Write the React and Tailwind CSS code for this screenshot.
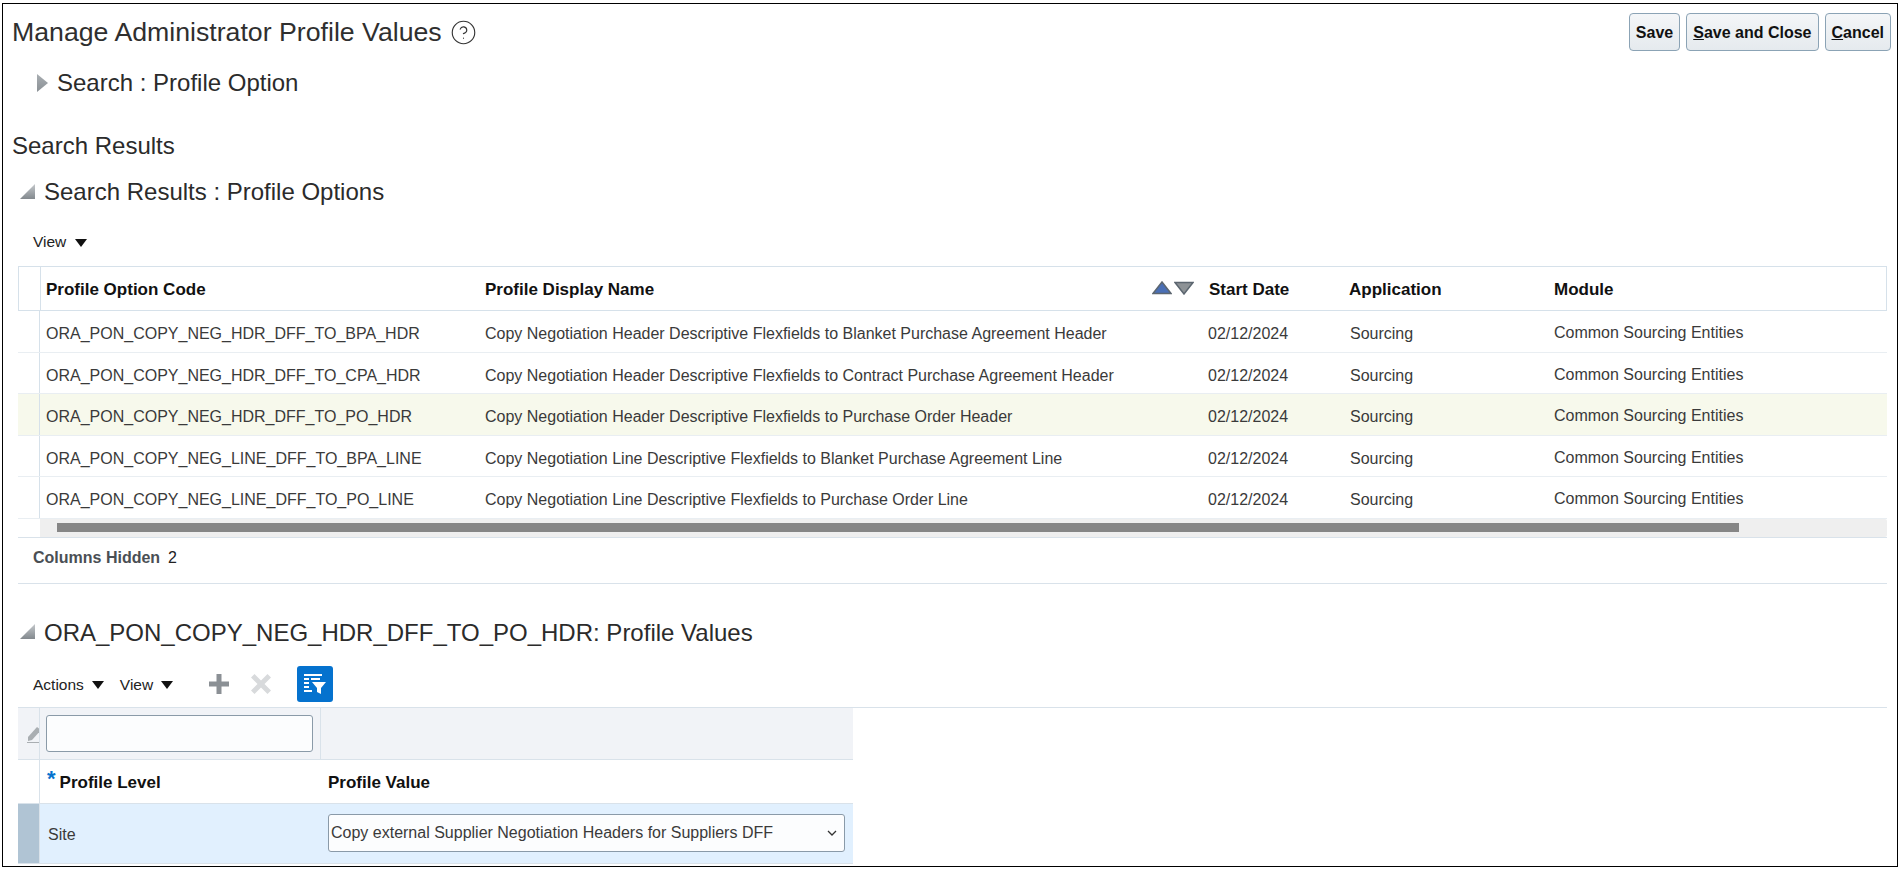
import React from 'react';
import { CircleHelp } from 'lucide-react';

const rows = [
  ['ORA_PON_COPY_NEG_HDR_DFF_TO_BPA_HDR', 'Copy Negotiation Header Descriptive Flexfields to Blanket Purchase Agreement Header'],
  ['ORA_PON_COPY_NEG_HDR_DFF_TO_CPA_HDR', 'Copy Negotiation Header Descriptive Flexfields to Contract Purchase Agreement Header'],
  ['ORA_PON_COPY_NEG_HDR_DFF_TO_PO_HDR', 'Copy Negotiation Header Descriptive Flexfields to Purchase Order Header'],
  ['ORA_PON_COPY_NEG_LINE_DFF_TO_BPA_LINE', 'Copy Negotiation Line Descriptive Flexfields to Blanket Purchase Agreement Line'],
  ['ORA_PON_COPY_NEG_LINE_DFF_TO_PO_LINE', 'Copy Negotiation Line Descriptive Flexfields to Purchase Order Line'],
];

const gridCols = 'grid grid-cols-[22px_434px_727px_141px_206px_1fr]';

const Caret = () => (
  <svg width="12" height="8" viewBox="0 0 12 8" className="mt-[2px] shrink-0">
    <path d="M0 0h12L6 8z" fill="#111" />
  </svg>
);

const CollapseIcon = () => (
  <svg width="15" height="15" viewBox="0 0 15 15" className="-mt-[2px] shrink-0">
    <defs>
      <linearGradient id="collapseFill" x1="0" y1="0" x2="0" y2="1">
        <stop offset="0" stopColor="#c4c8cb" />
        <stop offset="1" stopColor="#83898e" />
      </linearGradient>
    </defs>
    <path d="M15 0v15H0z" fill="url(#collapseFill)" />
  </svg>
);

const ExpandIcon = () => (
  <svg width="11" height="18" viewBox="0 0 11 18" className="shrink-0">
    <defs>
      <linearGradient id="expandFill" x1="0" y1="0" x2="0" y2="1">
        <stop offset="0" stopColor="#a9aeb2" />
        <stop offset="1" stopColor="#8a9095" />
      </linearGradient>
    </defs>
    <path d="M0 0l11 9L0 18z" fill="url(#expandFill)" />
  </svg>
);

const SortIcons = () => (
  <div className="absolute right-[8px] top-[14px] flex gap-[2px]">
    <svg width="20" height="14" viewBox="0 0 20 14">
      <path d="M10 1l9 11.500H1z" fill="#4a6fb5" stroke="#5c6670" strokeWidth="1.500" />
    </svg>
    <svg width="20" height="14" viewBox="0 0 20 14">
      <path d="M1 1.500h18L10 13z" fill="#8d9296" stroke="#5c6670" strokeWidth="1.500" />
    </svg>
  </div>
);

const PageButton = ({ children }) => (
  <button className="h-[38px] rounded-[4px] border border-[#8ba3b5] bg-gradient-to-b from-[#f4f6f8] to-[#e5eaee] px-[6px] pt-[2px] text-[16px] font-bold text-[#111]">
    {children}
  </button>
);

export default function App() {
  return (
    <div className="h-[869px] w-full overflow-hidden bg-white pb-[2px] pl-[2px] pr-[1px] pt-[3px] font-['Liberation_Sans',Arial,sans-serif] text-[#2b2b2b]">
      <div className="h-full overflow-hidden border border-black pl-[9px] pr-[6px]">
        {/* Page header */}
        <div className="flex h-[56px] items-center justify-between">
          <div className="flex items-center gap-[8px]">
            <h1 className="text-[26.700px] font-normal text-[#2f2f2f]">Manage Administrator Profile Values</h1>
            <CircleHelp size={27} strokeWidth={1} className="mt-[2px] text-[#333]" />
          </div>
          <div className="flex gap-[6px]">
            <PageButton>Save</PageButton>
            <PageButton><u>S</u>ave and Close</PageButton>
            <PageButton><u>C</u>ancel</PageButton>
          </div>
        </div>

        <div className="flex h-[46px] items-center gap-[9px] pl-[25px]">
          <ExpandIcon />
          <h2 className="text-[24px] font-normal">Search : Profile Option</h2>
        </div>

        <h2 className="mt-[22px] flex h-[36px] items-center text-[24px] font-normal">Search Results</h2>

        <div className="pl-[6px] pr-[4px]">
          <div className="mt-[8px] flex h-[40px] items-center gap-[9px] pl-[2px]">
            <CollapseIcon />
            <h2 className="text-[24px] font-normal">Search Results : Profile Options</h2>
          </div>

          <div className="flex h-[54px] items-center gap-[9px] pl-[15px] pt-[6px] text-[15.500px] text-[#222]">
            <span>View</span>
            <Caret />
          </div>

          {/* Profile options table */}
          <div className={`${gridCols} h-[45px] items-start border border-[#d6e1ea] text-[17px] font-bold text-[#111]`}>
            <div className="self-stretch border-r border-[#d6e1ea]" />
            <div className="pl-[5px] pt-[10px]">Profile Option Code</div>
            <div className="relative self-stretch pl-[10px] pt-[10px]">
              Profile Display Name
              <SortIcons />
            </div>
            <div className="pl-[7px] pt-[10px]">Start Date</div>
            <div className="pl-[6px] pt-[10px]">Application</div>
            <div className="pl-[5px] pt-[10px]">Module</div>
          </div>

          {rows.map((row, i) => (
            <div
              key={row[0]}
              className={`${gridCols} h-[41.600px] items-start border-b border-[#e9eef2] text-[16px] text-[#3a3a3a] ${i === 2 ? 'bg-[#f7f9ec]' : ''}`}
            >
              <div className="self-stretch border-r border-[#d6e1ea]" />
              <div className="pl-[6px] pt-[11px]">{row[0]}</div>
              <div className="pl-[11px] pt-[11px]">{row[1]}</div>
              <div className="pl-[7px] pt-[11px]">02/12/2024</div>
              <div className="pl-[8px] pt-[11px]">Sourcing</div>
              <div className="pl-[6px] pt-[10px]">Common Sourcing Entities</div>
            </div>
          ))}

          <div className="h-[19px] border-b border-[#d9e2ea] pl-[22px]">
            <div className="flex h-[18px] items-center rounded-r-[2px] bg-[#efefef] pl-[17px]">
              <div className="h-[9px] w-[1682px] bg-[#868686]" />
            </div>
          </div>

          <div className="flex h-[46px] items-center gap-[8px] border-b border-[#d9e2ea] pb-[4px] pl-[15px] text-[16px]">
            <span className="font-bold text-[#4a4f54]">Columns Hidden</span>
            <span className="text-[#222]">2</span>
          </div>

          <div className="flex h-[75px] items-center gap-[9px] pl-[2px] pt-[23px]">
            <CollapseIcon />
            <h2 className="text-[24px] font-normal">ORA_PON_COPY_NEG_HDR_DFF_TO_PO_HDR: Profile Values</h2>
          </div>

          <div className="flex h-[48px] items-center pl-[15px] pt-[3px] text-[15.500px] text-[#222]">
            <span>Actions</span>
            <span className="ml-[8px]"><Caret /></span>
            <span className="ml-[16px]">View</span>
            <span className="ml-[8px]"><Caret /></span>
            <svg width="20" height="20" viewBox="0 0 20 20" className="ml-[36px]">
              <path d="M7.500 0h5v7.500H20v5h-7.500V20h-5v-7.500H0v-5h7.500z" fill="#8b9095" />
            </svg>
            <svg width="20" height="20" viewBox="0 0 20 20" className="ml-[22px]">
              <path d="M3.500 0L10 6.500 16.500 0 20 3.500 13.500 10 20 16.500 16.500 20 10 13.500 3.500 20 0 16.500 6.500 10 0 3.500z" fill="#d8dadc" />
            </svg>
            <div className="ml-[26px] flex h-[36px] w-[36px] items-center justify-center rounded-[3px] bg-[#0572ce]">
              <svg width="24" height="22" viewBox="0 0 24 22">
                <path d="M1 1h18v2H1zM1 5h5v2H1zM8 5h9v2H8zM1 9h5v2H1zM1 13h5v2H1zM1 17h8v2H1z" fill="#fff" />
                <path d="M9 9h14l-5 6v6l-4-2v-4z" fill="#fff" />
              </svg>
            </div>
          </div>

          {/* Profile values table */}
          <div className="border-t border-[#d9e2ea]">
            <div className="grid w-[835px] grid-cols-[22px_281px_1fr]">
              <div className="flex h-[52px] items-center overflow-hidden border-b border-r border-[#d9e2ea] bg-[#f1f3f7] pl-[9px] pt-[2px]">
                <svg width="16" height="18" viewBox="0 0 16 18" className="shrink-0">
                  <path d="M1 12L10 2l4 3-9 10-4 1z" fill="#a9aeb2" />
                  <path d="M0 17h16v1H0z" fill="#a9aeb2" />
                </svg>
              </div>
              <div className="flex h-[52px] items-center border-b border-r border-[#d9e2ea] bg-[#f1f3f7] pl-[6px]">
                <input className="h-[37px] w-[267px] rounded-[3px] border border-[#8a9aa8] bg-[#fcfdfe]" aria-label="Profile Level filter" />
              </div>
              <div className="h-[52px] border-b border-[#d9e2ea] bg-[#f1f3f7]" />

              <div className="h-[44px] border-b border-r border-[#d9e2ea]" />
              <div className="flex h-[44px] items-center border-b border-[#d9e2ea] pl-[7px] pt-[2px] text-[17px] font-bold text-[#111]">
                <span className="mr-[4px] -mt-[6px] text-[22px] leading-none text-[#0572ce]">*</span>
                Profile Level
              </div>
              <div className="flex h-[44px] items-center border-b border-[#d9e2ea] pl-[7px] pt-[2px] text-[17px] font-bold text-[#111]">Profile Value</div>

              <div className="h-[60px] border-b border-r border-[#d9e2ea] bg-[#b0c4d4]" />
              <div className="flex h-[60px] items-center border-b border-[#d9e2ea] bg-[#e1f0fe] pl-[8px] pt-[3px] text-[16px] text-[#3a3a3a]">Site</div>
              <div className="flex h-[60px] items-center border-b border-[#d9e2ea] bg-[#e1f0fe] pl-[7px]">
                <div className="flex h-[38px] w-[517px] items-center justify-between rounded-[3px] border border-[#8a9aa8] bg-[#fcfdfe] pl-[2px] pr-[7px] text-[16px] text-[#3a3a3a]">
                  <span>Copy external Supplier Negotiation Headers for Suppliers DFF</span>
                  <svg width="10" height="6" viewBox="0 0 10 6">
                    <path d="M1 1l4 4 4-4" fill="none" stroke="#333" strokeWidth="1.300" />
                  </svg>
                </div>
              </div>
            </div>
          </div>
        </div>
      </div>
    </div>
  );
}
